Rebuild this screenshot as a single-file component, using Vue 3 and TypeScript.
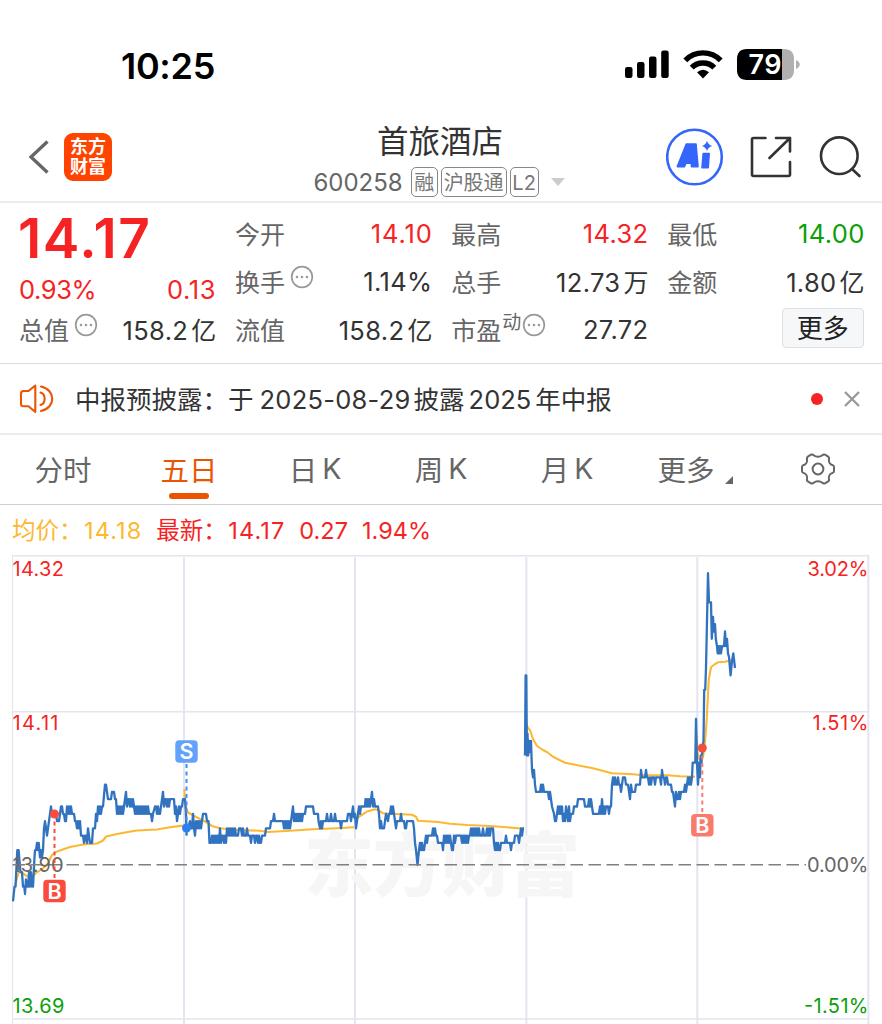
<script setup lang="ts">
interface Quote {
  label: string
  value: string
  tone?: 'up' | 'down'
  sup?: string
  info?: boolean
}

const quotes: Quote[][] = [
  [
    { label: '今开', value: '14.10', tone: 'up' },
    { label: '换手', value: '1.14%', info: true },
    { label: '流值', value: '158.2亿' },
  ],
  [
    { label: '最高', value: '14.32', tone: 'up' },
    { label: '总手', value: '12.73万' },
    { label: '市盈', value: '27.72', sup: '动', info: true },
  ],
]

const splitUnit = (v: string): [string, string] => {
  const unit = v.match(/[万亿]$/)?.[0] ?? ''
  return [unit ? v.slice(0, -1) : v, unit]
}

// Each sample is "x,ticks", where one tick is 0.01 above the 13.90 base line.
const days: string[] = [
  '13,-5 14.5,-3 15.5,-3 17.3,2 18.6,2 20.5,-1 22,-1 23,-3 24.3,-3 25,-4 26,-2 27.3,-3 28.3,-3 29,-1 30,-3 31,-1 32,-3 33,-3 34.5,1 35,2 36,2 37,3 38,2 38.7,3 39.4,2 40,1 41,2 42,1 43,2 44,5 45,6 46,5 47,4 48,5 49,6 50,7 51,8 52,7 56,7 57,6 59,6 60,7 61,8 62,8 63,7 64,7 65,6 66,6 67,8 68,7 69,8 70,7 71,8 72,7 74,7 75,6 76,6 77,5 78,6 79,5 80,6 81,4 83,4 84,3 85,4 86,4 87,3 88,5 89,4 90,3 92,3 93,5 95,5 96,7 97,6 98,8 99,7 100,8 101,7 102,8 103,8 105,11 106,11 108,9 111,9 112,10 114,10 115,9 116,9 117,7 118,8 119,7 120,8 121,7 122,8 123,7 124,8 126,10 127,8 128,9 129,9 130,8 131,9 132,8 133,9 134,8 135,7 136,8 137,7 138,8 139,7 140,8 141,7 142,8 143,7 144,8 145,7 146,8 147,7 148,8 149,7 151,7 152,6 153,7 155,8 156,8 157,7 158,8 159,7 160,7 161,8 163,10 164,8 165,9 166,9 167,8 168,9 169,8 170,9 174,9 175,7 176,8 177,6 178,7 179,8 180,7 181,8 182,8 183,9 185,9 186,7 186.6,4',
  '186.6,5 188,5 190,6 191,5 192,5 193,7 194,5 195,4 196,6 197,5 198,6 199,5 200,6 201,5 202,6 203,7 206,7 207,6 208.5,6 209.5,3 211,3 212,4 213,3 214,4 215,3 216,4 217,3 218,4 219,3 220,5 221,3 222,4 223,4 224,3 225,4 226,3 227,5 228,4 229,5 230,4 231,5 232,4 233,5 234,4 235,5 236,4 238,4 239,5 241,5 242,4 243,5 244,4 246,4 247,5 248,4 250,4 251,3 252,4 254,4 255,3 256,4 257,4 258,3 259,4 260,3 261,3 262,4 265,4 266,5 270,5 271,6 273,6 274,7 275,6 283,6 284,5 285,6 286,5 287,6 288,5 289,6 290,5 291,6 292,7 293,8 294,6 295,7 296,6 297,7 298,6 299,7 300,6 301,7 302,6 303,7 305,7 306,8 313,8 314,7 318,7 318.5,6 320,5 321,6 322,5 323,6 326,6 327,7 328,6 330,6 331,7 332,6 334,6 335,7 336,6 340,6 341,5 342,6 347,6 348,7 350,7 351,6 353,8 354,6.5 355,7 356,5 357,6 358,7 359,8 360,7 361,8 365,8 365.5,9 366.3,8 367,9 368,8 369,9 370,8 371,9 372,10 373,8 374,9 375,8 378,8 379,7 380,5 381,6 382,5 384,5 385,6 386,7 388,6 389,7 390,7 391,8 392,7 393,8 394,7 395,6 396,5 397,6 400,6 401,7 402,6 404,6 405,5 406,5 407,6 413,6 414,5 415,3 416,2 417.5,0 419,2 420,3 421,2 422,3 423,2 424,2 425,3 426,4 427,3 428,4 432,4 433,5 434,4 435,5 436,4 437,4 438,3 442,3 443,2 444,4 445,3 446,4 447,3 448,4 449,3 450,4 451,3 452,2 453,2 454,4 455,3 456,4 461,4 462,3 463,4 464,3 465,4 466,3 467,4 468,3 469,4 470,4 471,5 472,4 473,5 474,4 475,5 476,4 477,5 478,4 479,5 480,4 482,4 483,5 484,4 486,4 487,5 488,4 489,5 490,4 491,5 493,5 494,3 495,2 496,3 497,2 498,3 499,2 500,2 501,3 505,3 506,4 507,3 510,3 511,2 512,3 514,3 515,4 518,4 519,3 520,4 521,5 522,4 523,5 524,5',
  '525,15 525.6,26 526.3,26 526.9,15 527.5,18 528.2,15 529,17 529.7,15.5 531,17 532,13 533,12 534,13 535,11 536,10 540,10 541,11 542,10 543,11 544,10 548,10 549,9 550,10 551,9 552,8 554,7 555,6 556,6 557,7 558,8 559,7 560,8 561,7 562,8 563,6 564,7 565,6 566,8 567,7 568,6 569,8 570,6 571,7 573,7 574,8 577,8 578,9 584,9 585,8 588,8 589,9 590,8 591,9 592,8 593,7 599,7 600,8 601,7 602,9 603,7 604,8 605,7 606,8 608,8 609,7 610,8 611,8 612,11 613,12 614,11 615,12 616,11 617,11 618,12 619,11 620,11 621,10 622,11 623,12 625,12 626,11 628,11 629,10 630,9 631,11 632,10 635,10 636,11 640,11 641,13 642,12 644,12 645,12 646,13 647,12 648,12 649,11 650,12 651,11 652,12 654,12 655,11 656,12 660,12 661,11 662,13 663,12 664,12 665,11 666,12 667,12 668,11 671,11 672,10 673,10 674,9 675,8 676,10 677,9 678,9 679,10 680,9 681,10 684,10 685,11 686,10 687,11 688,12 689,11 690,12 691,11 692,12 692.7,14 695.3,14 696,20 697,14 698,11 699,14 700,12 700.7,15 701.5,14 702.5,16 703.5,17 704.2,24 705.2,24 706,27 708,40 709,36 711,36 711.8,31 713,34 713.8,32 715,33 715.8,31 717,30 717.7,29 718.5,30 719.3,29 720,30 721,29 722,30 724,30 725,32 726,30 727,31 728,29 729,28.5 730.6,26 732,28 733.3,29 735,27',
]

const trace = (samples: string): string =>
  samples
    .split(' ')
    .map((s) => s.split(',').map(Number))
    .map(([x, t]) => `${x},${(864.8 - t * 7.29).toFixed(1)}`)
    .join(' ')

const lines: string[] = days.map(trace)

const averages: string[] = [
  '15,887 17,878 19,872 22,872.5 25,875 28,876.5 33,876 36,873 42,869 47,865 52,855 57,851.5 70,847 83,844.5 97,843.5 103,840.5 106,836.5 117,834 128,832 137,830.5 157,829.5 170,827.3 183,825.6',
  '184.3,789 185.3,805 188,812.5 197,817.5 205,821.5 212,826 220,828.3 237,830 260,830.7 268,832 290,830.7 313,829.3 337,828.3 354,827.3',
  '355,820 360,816 367,811.6 375,809.3 378,810 383,813.3 397,814 412,814.7 416,816.7 418,820.7 438,822 450,823.7 467,825 490,826 507,827.3 524,828.7',
  '526,723 528,728 530,730 533,739 537,746 543,750 548,752.7 553,756.7 565,762.7 580,765.7 593,768.3 612,773.3 633,774.3 643,775.3 667,775.3 680,776.3 695,776.7',
  '696.5,735 698,757 700,760 703,757 705,742 706.7,720 708.7,680 711,667.3 715,664 718,662.3 725,661.7 732,660',
]

const tabs: string[] = ['分时', '五日', '日K', '周K', '月K', '更多']
const marks = [
  { x: 54.5, y: 814, box: 891, text: 'B', kind: 'buy' },
  { x: 186.5, y: 828, box: 751.5, text: 'S', kind: 'sell' },
  { x: 702.3, y: 748, box: 825.2, text: 'B', kind: 'buy soft' },
]
</script>

<template>
  <main class="screen">
    <div class="status">
      <span class="clock">10:25</span>
      <svg class="signals" width="178" height="36" viewBox="0 0 178 36">
        <rect x="1" y="20" width="7.5" height="11" rx="2.2" />
        <rect x="13" y="15" width="7.5" height="16" rx="2.2" />
        <rect x="25" y="9.5" width="7.5" height="21.5" rx="2.2" />
        <rect x="37.2" y="3.5" width="7.5" height="27.5" rx="2.2" />
        <g fill="none" stroke="#000" stroke-width="5.4">
          <path d="M61.3 13.3C71 3.4 87 3.4 96.7 13.3" />
          <path d="M67.7 20.7C73.7 14.5 84.3 14.5 90.3 20.7" />
        </g>
        <path d="M73 25.3Q79 20.2 85 25.3L79 31.4Z" />
        <path d="M123 2h35v31h-35c-7 0-10-4-10-10V12c0-6 3-10 10-10z" />
        <path d="M158 2h2c7 0 10 4 10 10v11c0 6-3 10-10 10h-2z" fill="#b0b0b0" />
        <path d="M172 13c5 2 5 7 0 9z" fill="#b0b0b0" />
        <text x="124.5" y="27" fill="#fff" font-size="27" font-weight="600" textLength="33">79</text>
      </svg>
    </div>

    <header class="nav">
      <div class="left">
        <svg width="22" height="38" viewBox="0 0 22 38"><path d="M19.5 3.5 3 19l16.5 15.5" fill="none" stroke="#666" stroke-width="3.3" /></svg>
        <div class="logo"><span>东方</span><span>财富</span></div>
      </div>
      <div class="heading">
        <h1>首旅酒店</h1>
        <div class="sub">
          <span class="code">600258</span>
          <span class="tag rong">融</span><span class="tag hgt">沪股通</span><span class="tag l2">L2</span>
          <svg class="caret" width="14" height="8" viewBox="0 0 14 8"><path d="M0 0h14L7 8z" fill="#ccc" /></svg>
        </div>
      </div>
      <div class="actions">
        <svg width="58" height="58" viewBox="0 0 58 58" fill="#3566fb">
          <circle cx="28.5" cy="29" r="27.300" fill="none" stroke="#3566fb" stroke-width="2.600" />
          <path fill-rule="evenodd" stroke="#3566fb" stroke-width="1.600" stroke-linejoin="round" d="M20.300 16h9.700l2 22.600h-6.600v-3.400h-5.400l-1.600 3.400H11.300zM22.800 29h2.600l-.2-4z" />
          <path stroke="#3566fb" stroke-width="1.600" stroke-linejoin="round" d="M37.200 25.500h6l-1 14.200h-6.200z" />
          <path d="M41 12.800q1 4 5.200 5.200-4.200 1.200-5.200 5.200-1-4-5.200-5.200 4.200-1.200 5.200-5.200z" />
        </svg>
        <svg width="42" height="42" viewBox="0 0 42 42" fill="none" stroke="#333" stroke-width="2.600" stroke-linecap="round" stroke-linejoin="round">
          <path d="M15.500 2H3.500Q2 2 2 3.500v35Q2 40 3.500 40h35q1.500 0 1.500-1.500V26M26 2h14v13.500M40 2 19.500 22" />
        </svg>
        <svg class="search" width="43" height="42" viewBox="0 0 43 42" fill="none" stroke="#333" stroke-width="2.600" stroke-linecap="round"><circle cx="20.300" cy="19.700" r="18.300" /><path d="m33 33 7.500 7" /></svg>
      </div>
    </header>

    <section class="quote">
      <div class="col">
        <strong class="price">14.17</strong>
        <div class="change"><span class="pct">0.93%</span><span class="delta">0.13</span></div>
        <div class="row">
          <span class="label">总值</span>
          <svg class="info" width="24" height="24" viewBox="0 0 24 24"><circle cx="12" cy="12" r="10.300" /><path d="M7 12h0M12 12h0M17 12h0" /></svg>
          <span class="value">158.2<i>亿</i></span>
        </div>
      </div>
      <div v-for="(col, i) in quotes" :key="i" class="col">
        <div v-for="q in col" :key="q.label" class="row">
          <span class="label">{{ q.label }}</span>
          <span v-if="q.sup" class="sup">{{ q.sup }}</span>
          <svg v-if="q.info" :class="['info', { tight: q.sup }]" width="24" height="24" viewBox="0 0 24 24"><circle cx="12" cy="12" r="10.300" /><path d="M7 12h0M12 12h0M17 12h0" /></svg>
          <span :class="['value', q.tone, { wide: q.value === '14.10' }]">{{ splitUnit(q.value)[0] }}<i v-if="splitUnit(q.value)[1]">{{ splitUnit(q.value)[1] }}</i></span>
        </div>
      </div>
      <div class="col">
        <div class="row"><span class="label">最低</span><span class="value down">14.00</span></div>
        <div class="row"><span class="label">金额</span><span class="value">1.80<i>亿</i></span></div>
        <div class="row end"><button class="more">更多</button></div>
      </div>
    </section>

    <section class="notice">
      <svg width="36" height="32" viewBox="0 0 36 32" fill="none" stroke="#ea5504" stroke-width="2.100" stroke-linecap="round" stroke-linejoin="round">
        <path d="M16.300 2.500v26.500l-6.800-5.700H4.500Q2 23.300 2 20.500v-9.800Q2 8 4.500 8h5zM21.500 9.500c5.500 1.500 5.500 11 0 12.500M22 3.500c15 3.200 15 21.300 0 24.500" />
      </svg>
      <p>中报预披露：<span class="yu">于</span><b>2025-08-29</b>披露<b>2025</b>年中报</p>
      <i class="dot"></i>
      <svg width="18" height="18" viewBox="0 0 18 18"><path d="m2 2 14 14M16 2 2 16" stroke="#999" stroke-width="2.300" /></svg>
    </section>

    <nav class="tabs">
      <div v-for="t in tabs" :key="t" :class="['tab', { active: t === '五日', menu: t === '更多' }]">
        {{ t.replace('K', '') }}<span v-if="t.endsWith('K')" class="k">K</span>
        <svg v-if="t === '更多'" width="8" height="8" viewBox="0 0 8 8"><path d="M8 0v8H0z" fill="#666" /></svg>
      </div>
      <div class="gear">
        <svg width="34" height="32" viewBox="0 0 34 32" fill="none" stroke="#666" stroke-width="2">
          <path stroke-linejoin="round" d="M10 1.700Q11.500 1 12.700 2.200C15 4.200 19 4.200 21.300 2.200Q22.500 1 24 1.700L27.200 3.600Q28.400 4.500 28 6.200C27.500 9 29.300 11.700 32 12.300Q33 12.800 33 14V18Q33 19.200 32 19.700C29.300 20.300 27.500 23 28 25.800Q28.400 27.500 27.200 28.400L24 30.300Q22.500 31 21.300 29.800C19 27.800 15 27.800 12.700 29.800Q11.500 31 10 30.300L6.800 28.400Q5.600 27.500 6 25.800C6.500 23 4.700 20.300 2 19.700Q1 19.200 1 18V14Q1 12.800 2 12.300C4.700 11.700 6.500 9 6 6.200Q5.600 4.500 6.800 3.600Z" />
          <circle cx="17" cy="16" r="5.400" />
        </svg>
      </div>
    </nav>

    <div class="legend">
      <span class="avg">均价：<b class="num">14.18</b></span>
      <span class="last">最新：<b class="num">14.17</b></span>
      <b class="diff">0.27</b><b>1.94%</b>
    </div>

    <svg class="chart" width="882" height="469" viewBox="0 555 882 469">
      <g class="grid">
        <path d="M12 555.700H868.500M12 711.700H868.500M12 1019H868.500" stroke-width="1.600" />
        <path d="M12.500 555V1024" stroke-width="1.200" />
        <path d="M184 557V1024M355 557V1024M526.400 557V1024M697.300 557V1024M868.300 555V1024" stroke-width="2" />
      </g>
      <text class="watermark" x="304" y="891" textLength="276">东方财富</text>
      <polyline v-for="(a, i) in averages" :key="'a' + i" class="average" :points="a" />
      <polyline v-for="(l, i) in lines" :key="'l' + i" class="trace" :points="l" />
      <path d="M12.500 864.800H806" stroke="#808080" stroke-width="1.600" stroke-dasharray="12.500 5.500" />
      <g class="axis">
        <text x="12.500" y="575.500" class="red" textLength="51.500">14.32</text>
        <text x="12.500" y="729.500" class="red" textLength="46">14.11</text>
        <text x="12.500" y="871.500" class="mid" textLength="51">13.90</text>
        <text x="12.500" y="1012.500" class="green" textLength="52">13.69</text>
        <text x="807.500" y="575.500" class="red" textLength="61">3.02%</text>
        <text x="812.500" y="729.500" class="red" textLength="56">1.51%</text>
        <text x="807" y="871.500" class="mid" textLength="61.500">0.00%</text>
        <text x="804" y="1012.500" class="green" textLength="64.500">-1.51%</text>
      </g>
      <g v-for="m in marks" :key="m.x" :class="['mark', m.kind]">
        <line :x1="m.x" :x2="m.x" :y1="m.y" :y2="m.box" />
        <circle :cx="m.x" :cy="m.y" r="4.500" />
        <rect :x="m.x - 11.2" :y="m.box - 11.2" width="22.400" height="22.400" rx="4" />
        <text :x="m.x" :y="m.box + 7.7" text-anchor="middle">{{ m.text }}</text>
      </g>
    </svg>
  </main>
</template>

<style>
body {
  margin: 0;
  background: #fff;
}
</style>

<style scoped>
.screen {
  width: 882px;
  height: 1024px;
  overflow: hidden;
  background: #fff;
  color: #333;
  font-family: Inter, 'Noto Sans CJK SC', sans-serif;
}
svg {
  display: block;
  flex: none;
}
i {
  font-style: normal;
}
b {
  font-weight: 400;
}
.status {
  height: 110px;
  box-sizing: border-box;
  padding: 44px 80px 0 121px;
  display: flex;
  justify-content: space-between;
}
.clock {
  font-size: 36px;
  line-height: 44px;
  font-weight: 600;
  color: #000;
  letter-spacing: -0.3px;
}
.signals {
  margin-top: 3px;
}
.nav {
  height: 93px;
  box-sizing: border-box;
  border-bottom: 2px solid #ececec;
  display: grid;
  grid-template-columns: 260px 1fr 260px;
}
.left {
  display: flex;
  align-items: center;
  padding: 2px 0 0 28px;
  gap: 14px;
}
.logo {
  width: 48px;
  height: 48px;
  border-radius: 9px;
  background: #ff4400;
  color: #fff;
  display: flex;
  flex-direction: column;
  align-items: center;
  justify-content: center;
  font-size: 18px;
  line-height: 19.5px;
  font-weight: 700;
}
.heading {
  display: flex;
  flex-direction: column;
  align-items: center;
}
h1 {
  margin: 11px 0 0 -2px;
  font-size: 31.5px;
  line-height: 42px;
  font-weight: 400;
}
.sub {
  display: flex;
  align-items: center;
  height: 32px;
  margin-top: 3px;
  margin-left: -4px;
}
.code {
  font-size: 24px;
  color: #666;
  margin-right: 8px;
}
.tag {
  height: 30px;
  box-sizing: border-box;
  border: 1.5px solid #888;
  border-radius: 5px;
  font-size: 20px;
  line-height: 30px;
  color: #777;
  text-align: center;
  margin-right: 3px;
  white-space: nowrap;
}
.rong {
  width: 27px;
}
.hgt {
  width: 66px;
}
.l2 {
  width: 29px;
}
.caret {
  margin-left: 9px;
}
.actions {
  display: flex;
  align-items: center;
  padding: 2px 0 0 44px;
  gap: 26px;
}
.search {
  margin-left: 1px;
}
.quote {
  height: 161px;
  box-sizing: border-box;
  border-bottom: 1px solid #dcdcdc;
  padding: 6px 18px 0 19px;
  display: grid;
  grid-template-columns: repeat(4, 196.5px);
  column-gap: 19.6px;
}
.price {
  display: block;
  height: 57px;
  line-height: 59px;
  font-size: 55px;
  font-weight: 600;
  letter-spacing: 1.6px;
  margin-left: -1px;
  color: #f52323;
}
.change {
  display: flex;
  justify-content: space-between;
  height: 39px;
  line-height: 47px;
  font-size: 25.5px;
  color: #f52323;
}
.pct {
  letter-spacing: -0.4px;
}
.delta {
  letter-spacing: 0.6px;
  margin-right: -0.6px;
}
.row {
  height: 48px;
  display: flex;
  align-items: center;
}
.label {
  font-size: 25px;
  color: #666;
}
.info {
  margin: -9px 0 0 5px;
  fill: none;
  stroke: #999;
  stroke-width: 1.7;
}
.info path {
  stroke-width: 2.6;
  stroke-linecap: round;
}
.info.tight {
  margin-left: 1px;
}
.sup {
  font-size: 19px;
  color: #666;
  margin: -17px 0 0 1px;
}
.value {
  margin-left: auto;
  margin-right: -0.8px;
  font-size: 25.5px;
  letter-spacing: 0.35px;
  white-space: nowrap;
}
.value.wide {
  letter-spacing: 0.9px;
  margin-right: -1.2px;
}
.value i {
  font-size: 25px;
  letter-spacing: 0;
  margin-left: 3px;
}
.up {
  color: #f52323;
}
.down {
  color: #0aa00a;
}
.end {
  justify-content: flex-end;
}
.more {
  width: 82px;
  height: 40px;
  box-sizing: border-box;
  padding: 2px 0 0;
  border: 1.5px solid #dddfe4;
  border-radius: 4px;
  background: #f6f7f9;
  font: inherit;
  font-size: 26px;
  line-height: 36px;
  color: #222;
  margin-top: -2px;
}
.notice {
  height: 71px;
  box-sizing: border-box;
  border-bottom: 2px solid #ececec;
  display: flex;
  align-items: center;
  padding: 0 21px 0 19px;
}
.notice p {
  margin: -3px auto 0 20px;
  font-size: 25.5px;
  white-space: nowrap;
}
.notice b {
  margin: 0 3px 0 6px;
  letter-spacing: 0.25px;
}
.notice b + b {
  margin-right: 4px;
  margin-left: 4px;
  letter-spacing: 0;
}
.dot {
  width: 12px;
  height: 12px;
  border-radius: 50%;
  background: #f52323;
  margin-right: 20px;
}
.tabs {
  height: 70px;
  box-sizing: border-box;
  border-bottom: 1px solid #d0d0d0;
  display: grid;
  grid-template-columns: repeat(7, 126px);
}
.tab,
.gear {
  display: flex;
  align-items: center;
  justify-content: center;
  position: relative;
  font-size: 28.5px;
  color: #666;
  padding-bottom: 2px;
}
.gear {
  padding: 0 3px 1px 0;
}
.menu {
  padding-right: 12px;
}
.tab .k {
  margin-left: 5px;
}
.tab svg {
  margin: 22px -16px 0 10px;
}
.active {
  color: #ea5504;
}
.active::after {
  content: '';
  position: absolute;
  width: 40px;
  height: 6px;
  border-radius: 3px;
  left: 43px;
  bottom: 5px;
  background: #ea5504;
}
.legend {
  height: 50px;
  line-height: 52px;
  display: flex;
  align-items: baseline;
  padding-left: 12px;
  font-size: 23.5px;
  color: #f52323;
  white-space: nowrap;
}
.num {
  letter-spacing: 1.1px;
  margin-left: 1.5px;
}
.avg {
  color: #fdb833;
  margin-right: 14px;
}
.last,
.diff {
  margin-right: 14px;
}
.grid {
  fill: none;
  stroke: #e4e5ee;
}
.watermark {
  font-size: 70px;
  font-weight: 900;
  fill: #f6f6f6;
}
.average,
.trace {
  fill: none;
  stroke-width: 2.1;
  stroke-linejoin: round;
}
.average {
  stroke: #fdb833;
}
.trace {
  stroke: #3273c0;
  stroke-width: 2.3;
}
.axis {
  font-size: 20px;
}
.red {
  fill: #f52323;
}
.green {
  fill: #0aa00a;
}
.mid {
  fill: #666;
}
.mark {
  fill: #fa4b3c;
  stroke: #fa4b3c;
}
.mark line {
  stroke-width: 2;
  stroke-dasharray: 4 3.5;
}
.mark circle,
.mark rect {
  stroke: none;
}
.mark text {
  fill: #fff;
  stroke: none;
  font-size: 21.5px;
  font-weight: 600;
}
.sell {
  fill: #62a2fb;
  stroke: #3f8dfa;
}
.sell circle {
  fill: #2980f5;
}
.soft {
  fill: #fa7a6c;
  stroke: #fa7a6c;
}
.soft circle {
  fill: #f2503f;
}
</style>
